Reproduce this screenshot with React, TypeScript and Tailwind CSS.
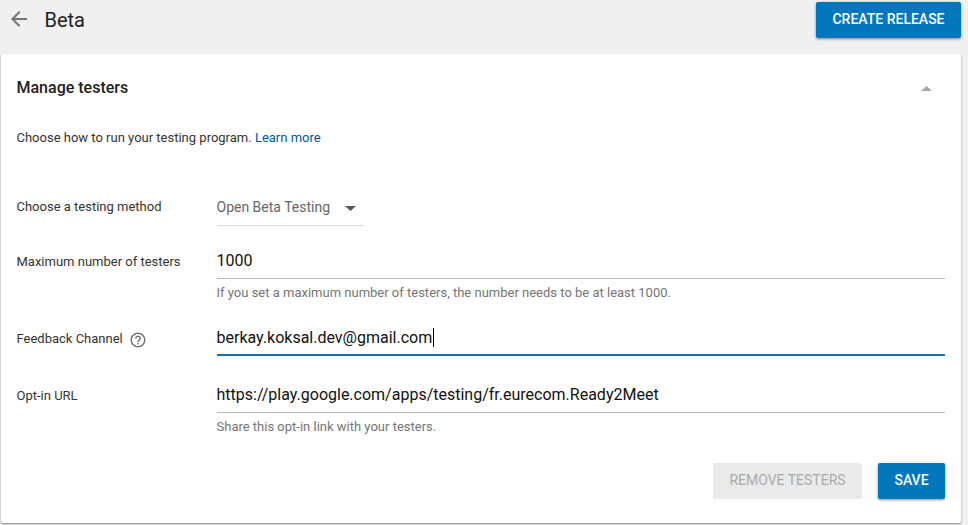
import type { ReactNode } from "react";

type FieldProps = {
  label: ReactNode;
  labelClass: string;
  className: string;
  children: ReactNode;
};

function Field({ label, labelClass, className, children }: FieldProps) {
  return (
    <div className={`flex items-start ${className}`}>
      <div className={`-ml-[0.5px] flex w-[200px] shrink-0 text-[13px] leading-5 text-[#333] ${labelClass}`}>{label}</div>
      <div className="min-w-0 flex-1">{children}</div>
    </div>
  );
}

function ArrowBack() {
  return (
    <svg className="ml-[7px] mt-[7px] size-6 shrink-0" viewBox="0 0 24 24" fill="#757575">
      <path d="M20 11H7.83l5.59-5.59L12 4l-8 8 8 8 1.41-1.41L7.83 13H20v-2z" />
    </svg>
  );
}

function HelpIcon() {
  return (
    <svg className="ml-[6px] mt-[2px] size-[18px]" viewBox="0 0 24 24" fill="#757575">
      <path d="M11 18h2v-2h-2v2zm1-16C6.48 2 2 6.48 2 12s4.48 10 10 10 10-4.48 10-10S17.52 2 12 2zm0 18c-4.41 0-8-3.59-8-8s3.59-8 8-8 8 3.59 8 8-3.59 8-8 8zm0-14c-2.21 0-4 1.79-4 4h2c0-1.1.9-2 2-2s2 .9 2 2c0 2-3 1.75-3 5h2c0-2.25 3-2.5 3-5 0-2.21-1.79-4-4-4z" />
    </svg>
  );
}

export default function App() {
  return (
    <div className="h-[525px] w-[968px] overflow-hidden bg-[#f0f0f0] font-['Roboto',sans-serif] text-[#212121]">
      <header className="flex h-[54px] items-start">
        <ArrowBack />
        <h1 className="ml-[13.5px] mt-[6px] text-[20px] leading-7">Beta</h1>
        <button className="ml-auto mr-[7px] mt-[2px] h-9 w-[145px] rounded-[2px] bg-[#0277bd] pb-[2px] text-[14px] font-medium text-white shadow-[0_1px_3px_rgba(0,0,0,0.45)]">
          CREATE RELEASE
        </button>
      </header>

      <main className="ml-px h-[469px] w-[960px] rounded-[2px] bg-white px-4 pt-[22px] shadow-[0_1px_2px_rgba(0,0,0,0.45)]">
        <div className="flex items-center justify-between">
          <h2 className="-ml-[0.5px] text-[16px] font-medium leading-6">Manage testers</h2>
          <svg className="mr-[13px] mt-px h-[5px] w-[11px]" viewBox="0 0 11 5" fill="#a6a6a6">
            <path d="M0 5h11L5.5 0z" />
          </svg>
        </div>
        <p className="-ml-[0.5px] mt-[28px] text-[13px] leading-5 text-[#333]">
          Choose how to run your testing program. <a className="text-[#01579b]">Learn more</a>
        </p>

        <Field label="Choose a testing method" labelClass="pt-[7px]" className="mt-[42px]">
          <div className="flex h-9 w-[147.5px] items-center border-b border-[#dcdcdc] text-[14px] text-[#666]">
            <span className="pb-[2px] leading-5">Open Beta Testing</span>
            <svg className="ml-auto mr-2 mt-[2px] h-[5px] w-[11px]" viewBox="0 0 11 5" fill="#555">
              <path d="M0 0h11L5.5 5z" />
            </svg>
          </div>
        </Field>

        <Field label="Maximum number of testers" labelClass="pt-1" className="mt-[22px]">
          <div className="border-b border-[#b8b8b8] pb-[5px] pt-px text-[16px] leading-6 text-[#111]">1000</div>
          <p className="mt-1 text-[13px] leading-5 text-[#757575]">
            If you set a maximum number of testers, the number needs to be at least 1000.
          </p>
        </Field>

        <Field
          label={
            <>
              Feedback Channel
              <HelpIcon />
            </>
          }
          labelClass="pt-[3px]"
          className="mt-[23px]"
        >
          <div className="flex items-center border-b-2 border-[#0f73b5] pb-1 text-[16px] leading-6 text-[#111]">
            berkay.koksal.dev@gmail.com
            <span className="mb-px ml-[0.7px] h-[19px] w-px bg-black" />
          </div>
        </Field>

        <Field label="Opt-in URL" labelClass="pt-1" className="mt-[26px]">
          <div className="border-b border-[#b8b8b8] pb-[5px] pt-px text-[16px] leading-6 text-[#111]">
            https://play.google.com/apps/testing/fr.eurecom.Ready2Meet
          </div>
          <p className="mt-1 text-[13px] leading-5 text-[#757575]">Share this opt-in link with your testers.</p>
        </Field>

        <div className="mt-[26px] flex justify-end gap-4 text-[14px] font-medium">
          <button className="h-9 w-[149px] rounded-[2px] bg-[#eaeaea] pb-px font-normal text-[#aaa]">REMOVE TESTERS</button>
          <button className="h-9 w-[67px] rounded-[2px] bg-[#0277bd] pb-px text-white shadow-[0_1px_3px_rgba(0,0,0,0.45)]">
            SAVE
          </button>
        </div>
      </main>
    </div>
  );
}
